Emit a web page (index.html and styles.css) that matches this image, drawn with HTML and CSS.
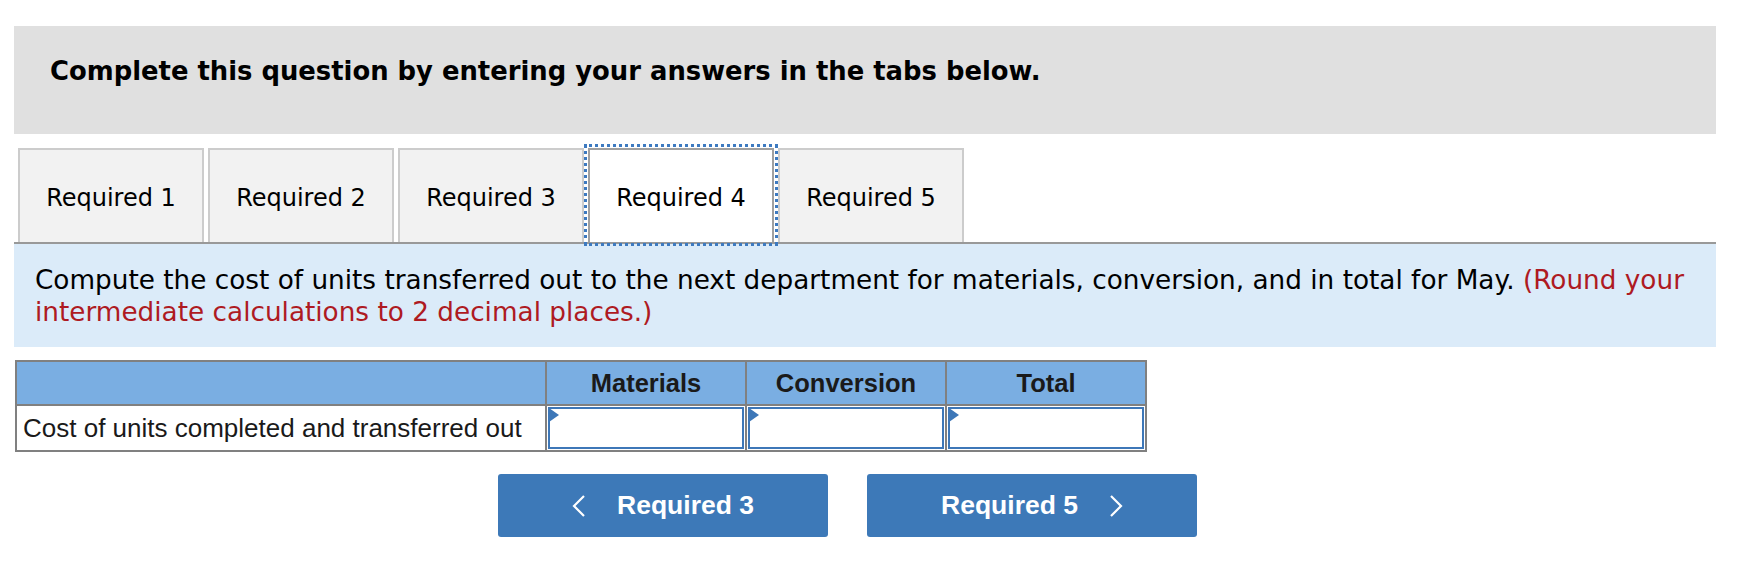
FILE: index.html
```html
<!DOCTYPE html>
<html>
<head>
<meta charset="utf-8">
<link rel="stylesheet" href="styles.css">
</head>
<body>
<div class="page">
  <div class="banner">Complete this question by entering your answers in the tabs below.</div>
  <div class="tabs">
    <div class="tab">Required 1</div>
    <div class="tab">Required 2</div>
    <div class="tab">Required 3</div>
    <div class="tab active">Required 4</div>
    <div class="tab">Required 5</div>
  </div>
  <div class="prompt">Compute the cost of units transferred out to the next department for materials, conversion, and in total for May. <span class="hint">(Round your intermediate calculations to 2 decimal places.)</span></div>
  <table class="grid">
    <colgroup>
      <col class="c-label">
      <col class="c-val">
      <col class="c-val">
      <col class="c-val">
    </colgroup>
    <tr class="head">
      <th class="label"></th>
      <th>Materials</th>
      <th>Conversion</th>
      <th>Total</th>
    </tr>
    <tr>
      <td class="label">Cost of units completed and transferred out</td>
      <td class="cell"><div class="input"></div></td>
      <td class="cell"><div class="input"></div></td>
      <td class="cell"><div class="input"></div></td>
    </tr>
  </table>
  <div class="nav">
    <div class="btn prev"><svg class="chev" width="14" height="22" viewBox="0 0 14 22"><polyline points="12,1 2,11 12,21" fill="none" stroke="#ffffff" stroke-width="2.2"/></svg><span>Required 3</span></div>
    <div class="btn next"><span>Required 5</span><svg class="chev" width="14" height="22" viewBox="0 0 14 22"><polyline points="2,1 12,11 2,21" fill="none" stroke="#ffffff" stroke-width="2.2"/></svg></div>
  </div>
</div>
</body>
</html>
```
FILE: styles.css
```css
html, body {
  margin: 0;
  padding: 0;
  background: #ffffff;
}
.page {
  padding: 26px 46px 0 14px;
  font-family: "DejaVu Sans", Verdana, sans-serif;
  color: #000;
}
.banner {
  background: #e0e0e0;
  height: 108px;
  box-sizing: border-box;
  padding: 30px 0 0 36px;
  font-weight: bold;
  font-size: 25.85px;
  line-height: 30px;
}
.tabs {
  display: flex;
  gap: 4px;
  margin-top: 14px;
  padding-left: 4px;
  border-bottom: 2px solid #999999;
}
.tab {
  width: 186px;
  height: 94px;
  box-sizing: border-box;
  border: 2px solid #cccccc;
  border-bottom: none;
  background: #f2f2f2;
  display: flex;
  align-items: center;
  justify-content: center;
  font-size: 24px;
  padding-top: 4px;
}
.tab.active {
  background: #ffffff;
  border-color: #a0a0a0;
  outline: 3px dotted #3d7ac0;
  outline-offset: 1px;
}
.prompt {
  background: #dbebf9;
  height: 103px;
  box-sizing: border-box;
  padding: 20px 20px 0 21px;
  font-size: 26.3px;
  line-height: 32px;
}
.hint {
  color: #ae1a22;
}
.grid {
  margin-top: 13px;
  margin-left: 1px;
  width: 1131px;
  table-layout: fixed;
  border-collapse: collapse;
  font-family: "Liberation Sans", Arial, sans-serif;
  font-size: 26px;
}
.c-label {
  width: 530px;
}
.c-val {
  width: 200px;
}
.grid th, .grid td {
  border: 2px solid #808080;
  padding: 0;
}
.grid th {
  background: #7aaee2;
  height: 42px;
  color: #1a1a1a;
  font-weight: bold;
  font-size: 25.5px;
}
.grid td.label {
  height: 43px;
  padding-left: 6px;
  text-align: left;
  color: #1a1a1a;
  white-space: nowrap;
  overflow: hidden;
}
.grid td.cell {
  padding: 1px;
  vertical-align: top;
}
.input {
  position: relative;
  height: 38px;
  border: 2px solid #3d77b8;
  background: #ffffff;
}
.input::before {
  content: "";
  position: absolute;
  left: -1px;
  top: -1px;
  width: 0;
  height: 0;
  border-top: 7px solid transparent;
  border-bottom: 7px solid transparent;
  border-left: 10px solid #3d77b8;
}
.nav {
  display: flex;
  gap: 39px;
  margin-top: 22px;
  padding-left: 484px;
}
.btn {
  width: 330px;
  height: 63px;
  background: #3d79b8;
  border-radius: 3px;
  color: #ffffff;
  font-family: "Liberation Sans", Arial, sans-serif;
  font-weight: bold;
  font-size: 26.5px;
  display: flex;
  align-items: center;
  justify-content: center;
  gap: 31px;
}
.chev {
  display: block;
}
```
